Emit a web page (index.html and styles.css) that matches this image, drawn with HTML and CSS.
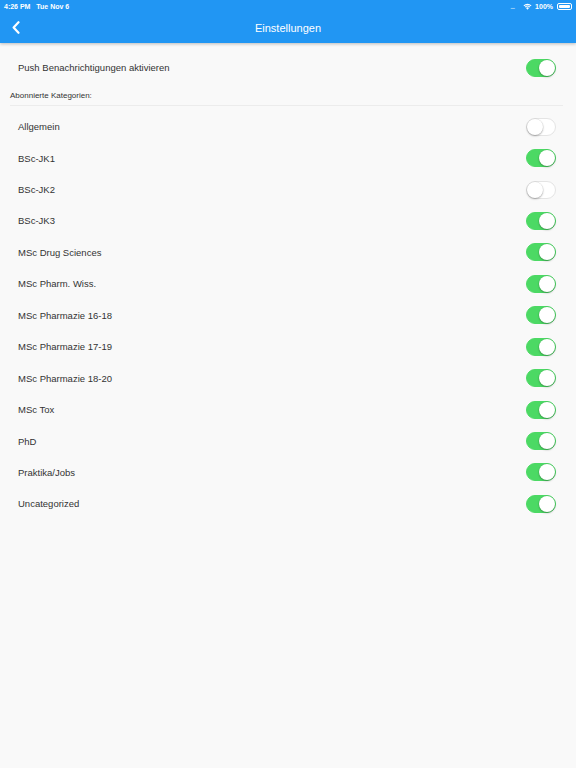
FILE: index.html
```html
<!DOCTYPE html>
<html lang="de">
    <head>
        <title>Einstellungen</title>
        <meta charset="utf-8">
        <link rel="stylesheet" href="styles.css">
    </head>

    <body>
        <div class="kopf">
            <div class="statusleiste">
                <span class="zeit">4:26 PM&nbsp;&nbsp;&nbsp;Tue Nov 6</span>
                <span class="status-rechts">
                    <span class="punkte">....</span>
                    <svg class="wlan" width="9" height="7" viewBox="0 0 18 14">
                        <path d="M9 13.5 L12 10 A4.5 4.5 0 0 0 6 10 Z" fill="white"/>
                        <path d="M3.6 7.6 A7.8 7.8 0 0 1 14.4 7.6 L13 9.2 A5.6 5.6 0 0 0 5 9.2 Z" fill="white"/>
                        <path d="M1 4.8 A11.6 11.6 0 0 1 17 4.8 L15.5 6.5 A9.4 9.4 0 0 0 2.5 6.5 Z" fill="white"/>
                    </svg>
                    <span>100%</span>
                    <span class="batterie"><span class="batterie-fuellung"></span></span>
                </span>
            </div>
            <div class="titelleiste">
                <svg class="zurueck" width="8" height="13" viewBox="0 0 8 13">
                    <path d="M6.5 1.2 L1.6 6.5 L6.5 11.8" fill="none" stroke="white" stroke-width="2.2" stroke-linecap="round" stroke-linejoin="round"/>
                </svg>
                <h1 class="titel">Einstellungen</h1>
            </div>
        </div>

        <div class="inhalt">
            <div class="zeile">
                <span>Push Benachrichtigungen aktivieren</span>
                <span class="schalter an"></span>
            </div>

            <div class="abschnitt">Abonnierte Kategorien:</div>

            <div class="liste">
                <div class="zeile"><span>Allgemein</span><span class="schalter"></span></div>
                <div class="zeile"><span>BSc-JK1</span><span class="schalter an"></span></div>
                <div class="zeile"><span>BSc-JK2</span><span class="schalter"></span></div>
                <div class="zeile"><span>BSc-JK3</span><span class="schalter an"></span></div>
                <div class="zeile"><span>MSc Drug Sciences</span><span class="schalter an"></span></div>
                <div class="zeile"><span>MSc Pharm. Wiss.</span><span class="schalter an"></span></div>
                <div class="zeile"><span>MSc Pharmazie 16-18</span><span class="schalter an"></span></div>
                <div class="zeile"><span>MSc Pharmazie 17-19</span><span class="schalter an"></span></div>
                <div class="zeile"><span>MSc Pharmazie 18-20</span><span class="schalter an"></span></div>
                <div class="zeile"><span>MSc Tox</span><span class="schalter an"></span></div>
                <div class="zeile"><span>PhD</span><span class="schalter an"></span></div>
                <div class="zeile"><span>Praktika/Jobs</span><span class="schalter an"></span></div>
                <div class="zeile"><span>Uncategorized</span><span class="schalter an"></span></div>
            </div>
        </div>
    </body>
</html>
```

FILE: styles.css
```css
*, *::before, *::after{
    box-sizing: border-box;
    font-family: "Liberation Sans", Arial, sans-serif;
}

body{
    margin: 0;
    padding: 0;
    background-color: #f9f9f9;
    color: #333333;
    min-height: 768px;
}

.kopf{
    height: 43px;
    background-color: #2196f3;
    color: white;
    box-shadow: 0 1px 3px rgba(0,0,0,.25);
}

.statusleiste{
    height: 12px;
    padding: 0 4px;
    display: flex;
    justify-content: space-between;
    align-items: center;
    font-size: 7px;
    font-weight: bold;
}

.status-rechts{
    display: flex;
    align-items: center;
    gap: 3px;
}

.punkte{
    color: rgba(255,255,255,.5);
    letter-spacing: -1px;
    margin-right: 6px;
}

.batterie{
    width: 15px;
    height: 7px;
    border: 1px solid white;
    border-radius: 2px;
    padding: 1px;
    margin-left: 1px;
}

.batterie-fuellung{
    display: block;
    height: 100%;
    background: white;
    border-radius: 1px;
}

.titelleiste{
    height: 31px;
    display: flex;
    align-items: center;
    justify-content: center;
    position: relative;
}

.zurueck{
    position: absolute;
    left: 12px;
    top: 9px;
}

.titel{
    margin: 0;
    font-size: 11px;
    font-weight: normal;
}

.inhalt{
    padding-top: 9px;
}

.zeile{
    height: 31.45px;
    padding: 0 20px 0 18px;
    display: flex;
    justify-content: space-between;
    align-items: center;
    font-size: 9.5px;
}

.abschnitt{
    height: 23px;
    margin: 0 13px 0 10px;
    padding-top: 7px;
    line-height: 12px;
    font-size: 8px;
    border-bottom: 1px solid #ececec;
}

.liste{
    margin-top: 4.5px;
}

.schalter{
    width: 30px;
    height: 18px;
    border-radius: 9px;
    background: white;
    border: 1px solid #e4e4e4;
    position: relative;
}

.schalter::after{
    content: "";
    position: absolute;
    top: 0;
    left: 0;
    width: 16px;
    height: 16px;
    border-radius: 50%;
    background: white;
    box-shadow: 0 1px 2px rgba(0,0,0,.3), 0 0 0 .5px rgba(0,0,0,.08);
}

.schalter.an{
    background: #4cd964;
    border-color: #4cd964;
}

.schalter.an::after{
    left: 12px;
}
```
